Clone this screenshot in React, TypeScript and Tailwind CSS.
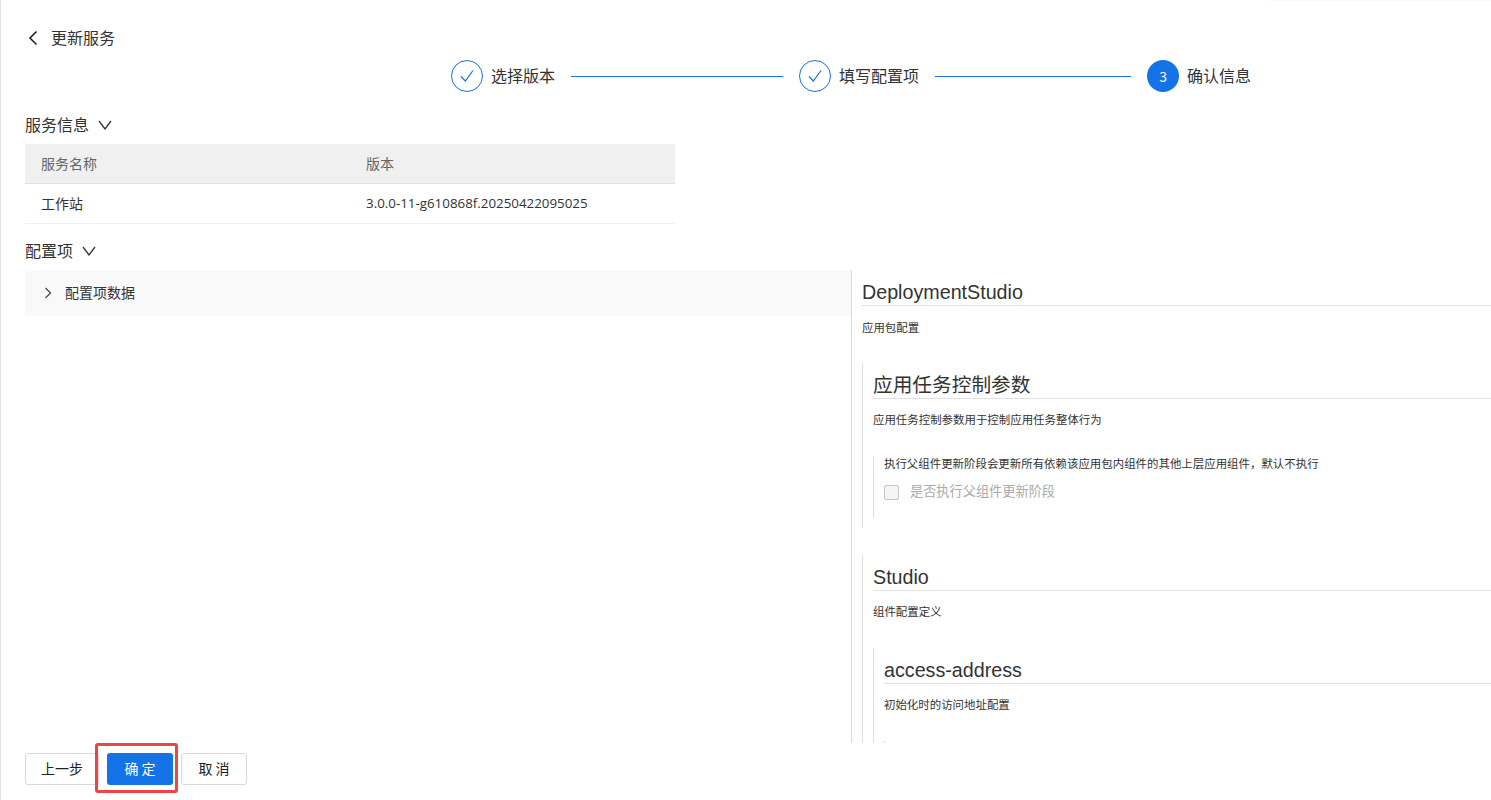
const sans = "font-['Liberation_Sans','Noto_Sans_CJK_SC',sans-serif]";

function Check() {
  return (
    <span className="flex h-8 w-8 items-center justify-center rounded-full border border-[#1473e6] bg-white">
      <svg width="16" height="16" viewBox="0 0 16 16" fill="none" stroke="#1473e6" strokeWidth="1.2">
        <path d="M2 8.5 L6.3 13 L14 2.5" />
      </svg>
    </span>
  );
}

function Line({ w }: { w: string }) {
  return <div className={`mx-4 h-px bg-[#1473e6] ${w}`} />;
}

function Down() {
  return (
    <svg width="14" height="10" viewBox="0 0 14 10" fill="none" stroke="#333" strokeWidth="1.3" className="ml-[9px]">
      <path d="M1 1 L7 9 L13 1" />
    </svg>
  );
}

function Title({ children }: { children: React.ReactNode }) {
  return (
    <div className="h-9 border-b border-[#e0e0e0] text-[19.7px] leading-[44px] text-[#333] whitespace-nowrap">{children}</div>
  );
}

function Desc({ children, mt = "mt-[13px]" }: { children: React.ReactNode; mt?: string }) {
  return <div className={`${mt} text-[11.44px] leading-4 text-[#333] whitespace-nowrap`}>{children}</div>;
}

export default function App() {
  return (
    <div className="relative flex h-[800px] flex-col overflow-hidden border-l border-[#e4e4e4] bg-white pl-6 font-['Noto_Sans_CJK_SC',sans-serif] text-[#333]">
      <div className="absolute right-0 top-0 h-px w-[221px] bg-[#f9f9f9]" />
      <div className="flex h-6 items-center mt-[26px]">
        <svg width="12" height="16" viewBox="0 0 12 16" fill="none" stroke="#222" strokeWidth="1.6" className="ml-[2px]">
          <path d="M9.5 1.5 L3 8 L9.5 14.5" />
        </svg>
        <span className="ml-3 pb-[2px] text-base leading-6">更新服务</span>
      </div>

      <div className="mt-[10px] flex h-8 items-center pl-[426px]">
        <Check />
        <span className="ml-2 pb-[2px] text-base leading-6">选择版本</span>
        <Line w="w-[212px]" />
        <Check />
        <span className="ml-2 pb-[2px] text-base leading-6">填写配置项</span>
        <Line w="w-[196px]" />
        <span className="flex h-8 w-8 items-center justify-center rounded-full bg-[#1473e6] text-sm text-white">3</span>
        <span className="ml-2 pb-[2px] text-base leading-6">确认信息</span>
      </div>

      <div className="mt-[21px] flex h-6 items-center">
        <span className="pb-[2px] text-base leading-6">服务信息</span>
        <Down />
      </div>
      <div className="mt-[7px] w-[650px] text-sm">
        <div className="flex h-10 items-center border-b border-[#e0e0e0] bg-[#f0f0f0] px-4 text-[#666]">
          <span className="w-[325px] pb-[2px]">服务名称</span>
          <span className="pb-[2px]">版本</span>
        </div>
        <div className="flex h-10 items-center border-b border-[#f0f0f0] px-4">
          <span className="w-[325px] pb-[2px]">工作站</span>
          <span className="font-['Open_Sans','Noto_Sans_CJK_SC',sans-serif] text-[13.35px]">3.0.0-11-g610868f.20250422095025</span>
        </div>
      </div>

      <div className="mt-[15px] flex h-6 items-center">
        <span className="pb-[2px] text-base leading-6">配置项</span>
        <Down />
      </div>

      <div className="mt-[7px] flex h-[473px] overflow-hidden">
        <div className="w-[826px] shrink-0">
          <div className="flex h-[46px] items-center bg-[#f9f9f9] pl-[19px] text-sm">
            <svg width="8" height="12" viewBox="0 0 8 12" fill="none" stroke="#444" strokeWidth="1.2">
              <path d="M1.5 1 L6.5 6 L1.5 11" />
            </svg>
            <span className="ml-[13px] pb-[2px]">配置项数据</span>
          </div>
        </div>
        <div className={`min-w-0 flex-1 border-l border-[#d9d9d9] pl-[10px] ${sans}`}>
          <Title>DeploymentStudio</Title>
          <Desc mt="mt-[14px]">应用包配置</Desc>

          <div className="mt-[27px] border-l border-[#e0e0e0] pb-[10px] pl-[10px]">
            <Title>应用任务控制参数</Title>
            <Desc>应用任务控制参数用于控制应用任务整体行为</Desc>
            <div className="mt-7 h-[62px] border-l border-[#e0e0e0] pl-[10px]">
              <Desc mt="mt-[6px]">执行父组件更新阶段会更新所有依赖该应用包内组件的其他上层应用组件，默认不执行</Desc>
              <div className="mt-[12px] flex h-4 items-center">
                <span className="h-[15px] w-[15px] rounded-[2px] border border-[#c4c4c4] bg-[#f5f5f5]" />
                <span className="ml-[11px] text-[13.2px] leading-4 text-[#aaa] whitespace-nowrap">是否执行父组件更新阶段</span>
              </div>
            </div>
          </div>

          <div className="mt-[27px] border-l border-[#e0e0e0] pl-[10px]">
            <Title>Studio</Title>
            <Desc>组件配置定义</Desc>
            <div className="mt-7 border-l border-[#e0e0e0] pl-[10px]">
              <Title>access-address</Title>
              <Desc>初始化时的访问地址配置</Desc>
              <div className="mt-7 h-10 border-l border-[#e0e0e0]" />
            </div>
          </div>
        </div>
      </div>

      <div className="mt-[10px] flex gap-2 text-sm">
        <button className="h-8 w-[74px] rounded-[3px] border border-[#d9d9d9] bg-white pb-[2px] text-[#222]">上一步</button>
        <button className="h-8 w-[66px] rounded-[3px] bg-[#1473e6] pb-[2px] text-white">确 定</button>
        <button className="h-8 w-[66px] rounded-[3px] border border-[#d9d9d9] bg-white pb-[2px] text-[#222]">取 消</button>
      </div>

      <div className="absolute left-[94px] top-[743px] h-[50px] w-[83px] rounded-[3px] border-[3px] border-[#ef4444]" />
    </div>
  );
}
